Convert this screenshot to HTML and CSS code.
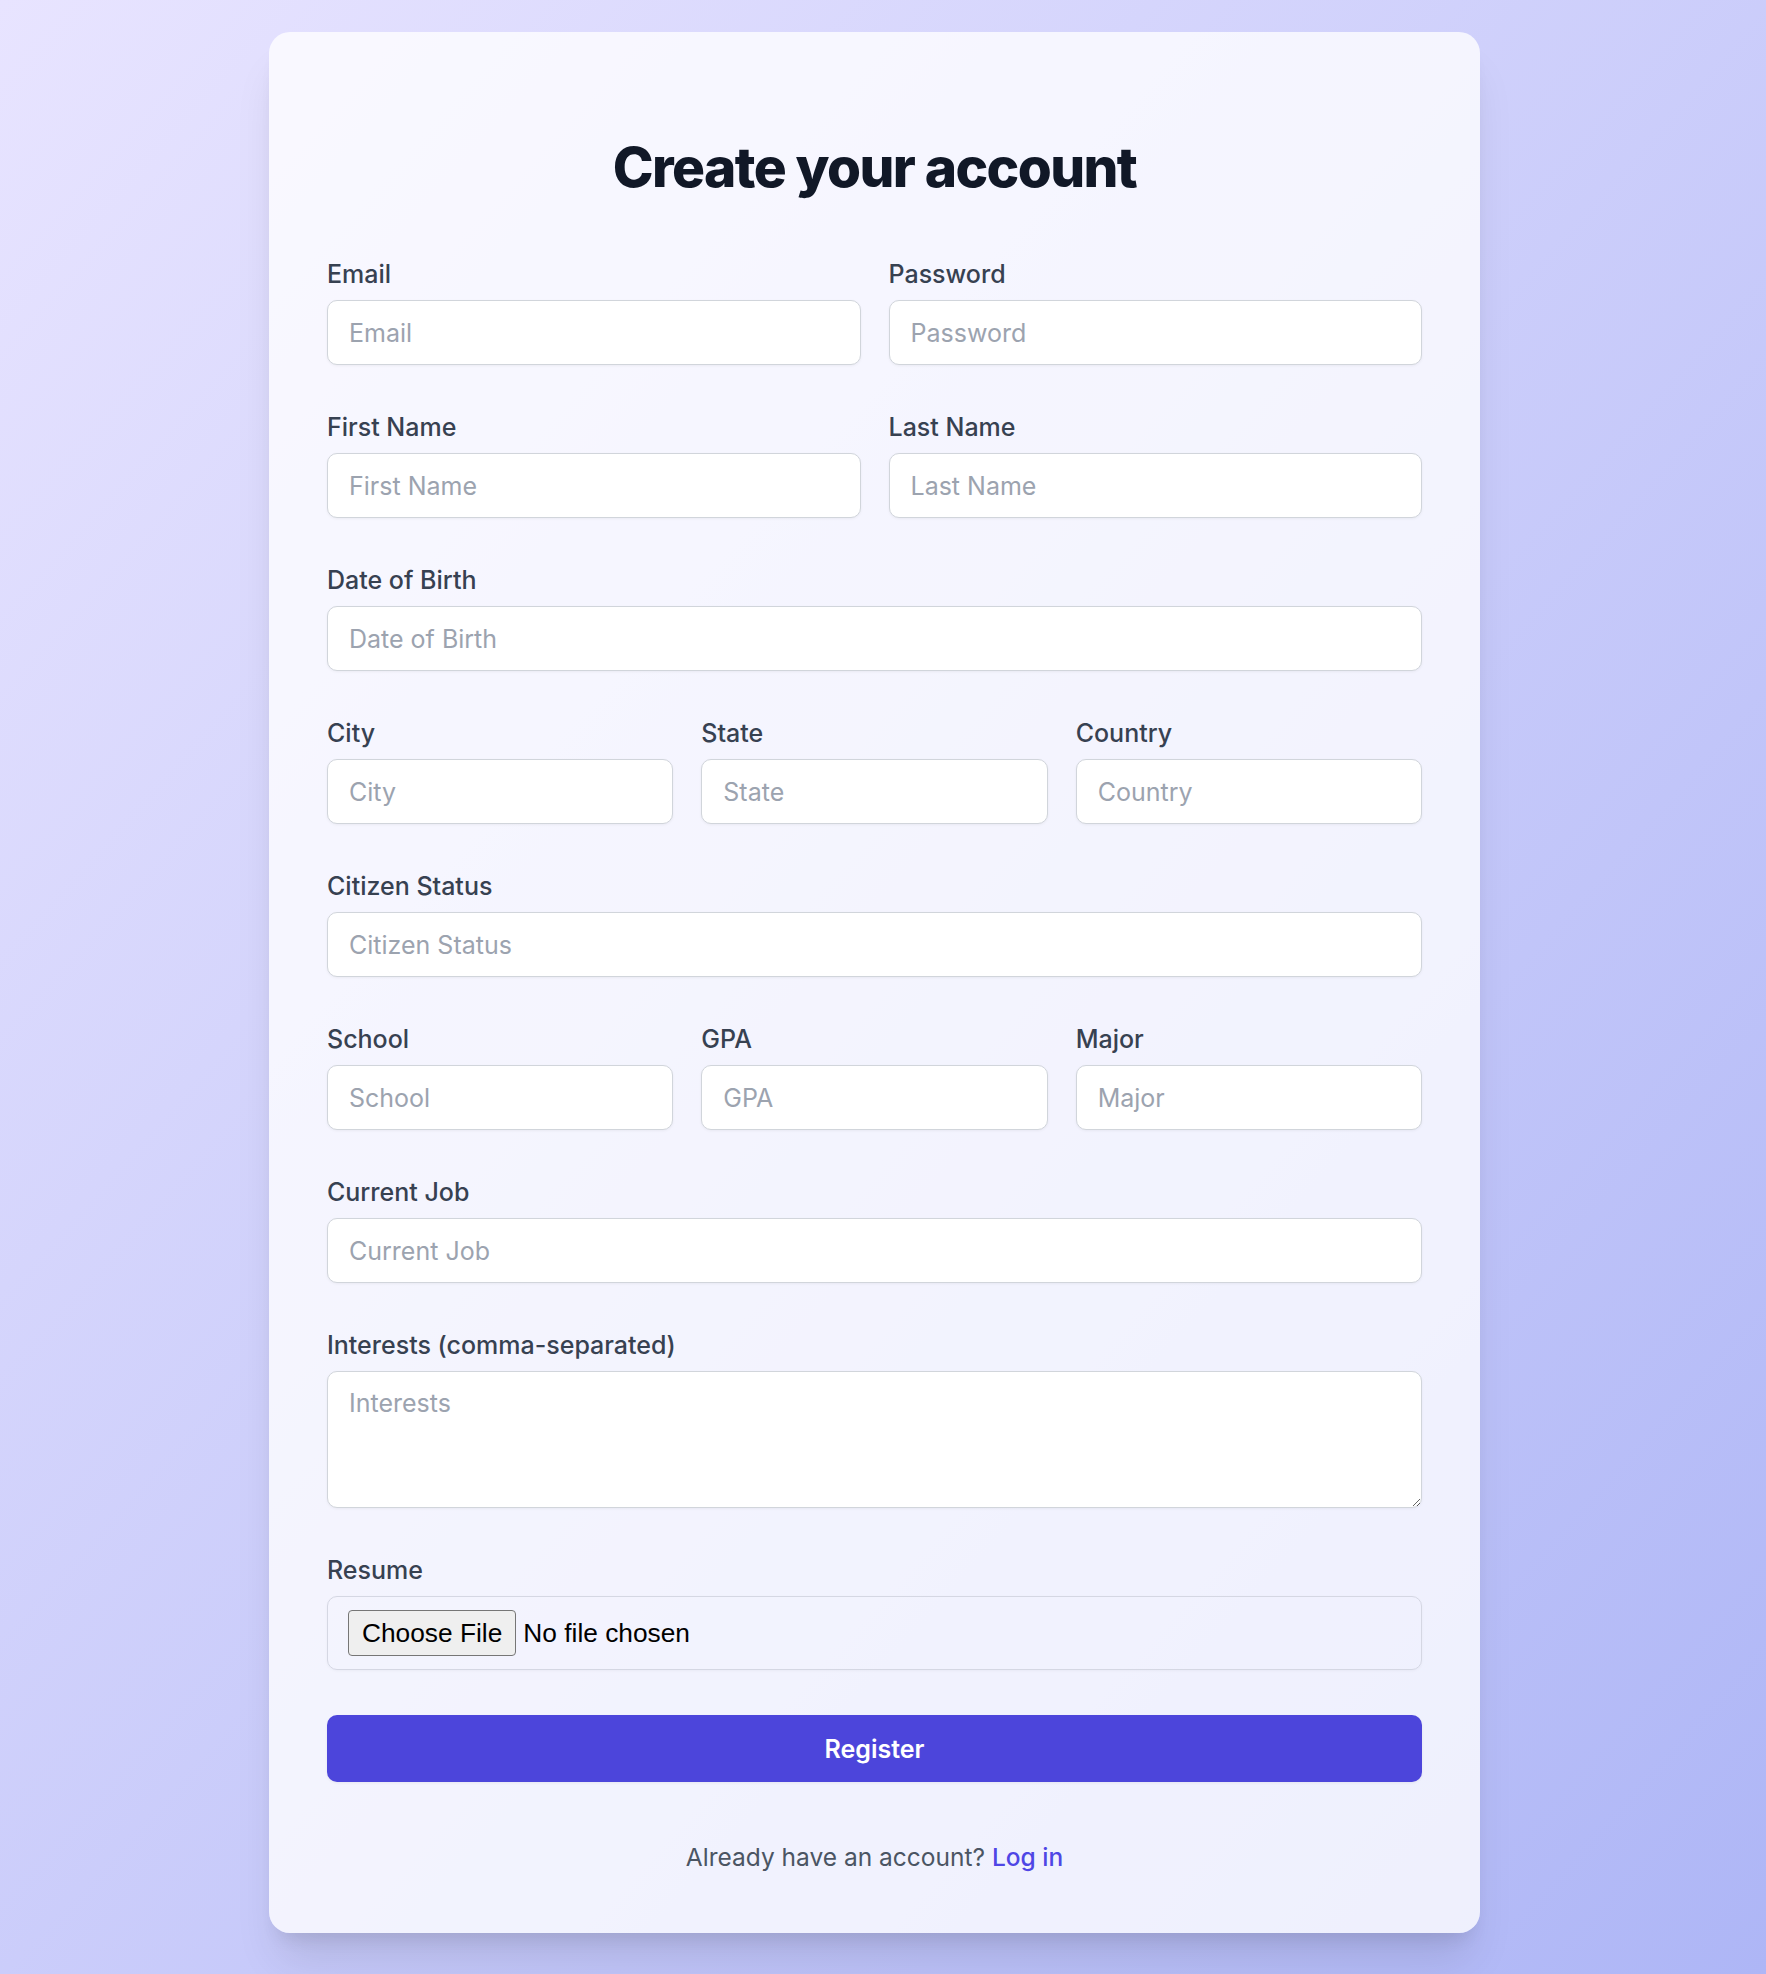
FILE: index.html
```html
<!DOCTYPE html>
<html lang="en">
  <head>
    <meta charset="UTF-8">
    <meta name="viewport" content="width=device-width, initial-scale=1.0">
    <title>Create your account</title>
    <link rel="stylesheet" href="styles.css">
  </head>
  <body>
    <div class="page">
      <div class="card">
        <h1>Create your account</h1>
        <form class="register-form">
          <div class="row row-2">
            <div class="field">
              <label for="email">Email</label>
              <input type="email" id="email" name="email" placeholder="Email">
            </div>
            <div class="field">
              <label for="password">Password</label>
              <input type="password" id="password" name="password" placeholder="Password">
            </div>
          </div>
          <div class="row row-2">
            <div class="field">
              <label for="first-name">First Name</label>
              <input type="text" id="first-name" name="first_name" placeholder="First Name">
            </div>
            <div class="field">
              <label for="last-name">Last Name</label>
              <input type="text" id="last-name" name="last_name" placeholder="Last Name">
            </div>
          </div>
          <div class="field">
            <label for="dob">Date of Birth</label>
            <input type="text" id="dob" name="dob" placeholder="Date of Birth">
          </div>
          <div class="row row-3">
            <div class="field">
              <label for="city">City</label>
              <input type="text" id="city" name="city" placeholder="City">
            </div>
            <div class="field">
              <label for="state">State</label>
              <input type="text" id="state" name="state" placeholder="State">
            </div>
            <div class="field">
              <label for="country">Country</label>
              <input type="text" id="country" name="country" placeholder="Country">
            </div>
          </div>
          <div class="field">
            <label for="citizen-status">Citizen Status</label>
            <input type="text" id="citizen-status" name="citizen_status" placeholder="Citizen Status">
          </div>
          <div class="row row-3">
            <div class="field">
              <label for="school">School</label>
              <input type="text" id="school" name="school" placeholder="School">
            </div>
            <div class="field">
              <label for="gpa">GPA</label>
              <input type="text" id="gpa" name="gpa" placeholder="GPA">
            </div>
            <div class="field">
              <label for="major">Major</label>
              <input type="text" id="major" name="major" placeholder="Major">
            </div>
          </div>
          <div class="field">
            <label for="current-job">Current Job</label>
            <input type="text" id="current-job" name="current_job" placeholder="Current Job">
          </div>
          <div class="field">
            <label for="interests">Interests (comma-separated)</label>
            <textarea id="interests" name="interests" rows="3" placeholder="Interests"></textarea>
          </div>
          <div class="field">
            <label for="resume">Resume</label>
            <div class="file-box">
              <input type="file" id="resume" name="resume">
            </div>
          </div>
          <button type="submit" class="register-btn">Register</button>
        </form>
        <p class="login-text">Already have an account? <a href="#">Log in</a></p>
      </div>
    </div>
  </body>
</html>
```

FILE: styles.css
```css
body {
  margin: 0;
  font-family: Inter, "Noto Sans", sans-serif;
  background: linear-gradient(to bottom right, #e8e4ff, #aeb6f6);
  min-height: 100vh;
}

.page {
  display: flex;
  justify-content: center;
  padding: 32px 17px 41px 0;
}

.card {
  width: 1211px;
  box-sizing: border-box;
  padding: 58px;
  background-color: rgba(255, 255, 255, 0.78);
  border-radius: 21px;
  box-shadow: 0 35px 44px -9px rgba(0, 0, 0, 0.1), 0 14px 18px -10px rgba(0, 0, 0, 0.1);
}

h1 {
  margin: 44px 0 57px;
  text-align: center;
  font-size: 55px;
  line-height: 66px;
  font-weight: 800;
  letter-spacing: -1.6px;
  color: #111827;
}

.register-form {
  display: flex;
  flex-direction: column;
  gap: 45px;
}

.row {
  display: grid;
  column-gap: 28px;
}

.row-2 {
  grid-template-columns: 1fr 1fr;
}

.row-3 {
  grid-template-columns: 1fr 1fr 1fr;
}

label {
  display: block;
  margin-bottom: 8px;
  font-size: 25px;
  line-height: 35px;
  font-weight: 500;
  color: #374151;
}

input[type="text"],
input[type="email"],
input[type="password"],
textarea {
  display: block;
  width: 100%;
  box-sizing: border-box;
  height: 65px;
  padding: 0 21px;
  font-family: Inter, "Noto Sans", sans-serif;
  font-size: 25px;
  color: #111827;
  background-color: #fff;
  border: 1px solid #d1d5db;
  border-radius: 10px;
  box-shadow: 0 1px 3px rgba(0, 0, 0, 0.05);
  outline: none;
}

textarea {
  height: 137px;
  padding: 14px 21px;
  line-height: 35px;
  resize: vertical;
}

input::placeholder,
textarea::placeholder {
  color: #9ca3af;
}

.file-box {
  display: flex;
  align-items: center;
  height: 74px;
  box-sizing: border-box;
  padding: 0 20px;
  border: 1px solid #d5d7e3;
  border-radius: 10px;
  box-shadow: 0 1px 3px rgba(0, 0, 0, 0.04);
}

input[type="file"] {
  font-family: "Liberation Sans", Arial, sans-serif;
  font-size: 26.3px;
  color: #000;
}

input[type="file"]::file-selector-button {
  font-family: "Liberation Sans", Arial, sans-serif;
  font-size: 26.3px;
  line-height: 30px;
  padding: 7px 13px;
  margin-right: 7px;
  color: #000;
  background-color: #efefef;
  border: 1px solid #767676;
  border-radius: 4px;
}

.register-btn {
  height: 67px;
  width: 100%;
  border: none;
  border-radius: 10px;
  background-color: #4c45db;
  color: #fff;
  font-family: Inter, "Noto Sans", sans-serif;
  font-size: 25px;
  font-weight: 600;
  cursor: pointer;
  box-shadow: 0 1px 3px rgba(0, 0, 0, 0.06);
}

.register-btn:hover {
  background-color: #4338ca;
}

.login-text {
  margin: 58px 0 0;
  text-align: center;
  font-size: 24.5px;
  line-height: 35px;
  color: #4b5563;
}

.login-text a {
  color: #4f46e5;
  font-weight: 500;
  text-decoration: none;
}
```
